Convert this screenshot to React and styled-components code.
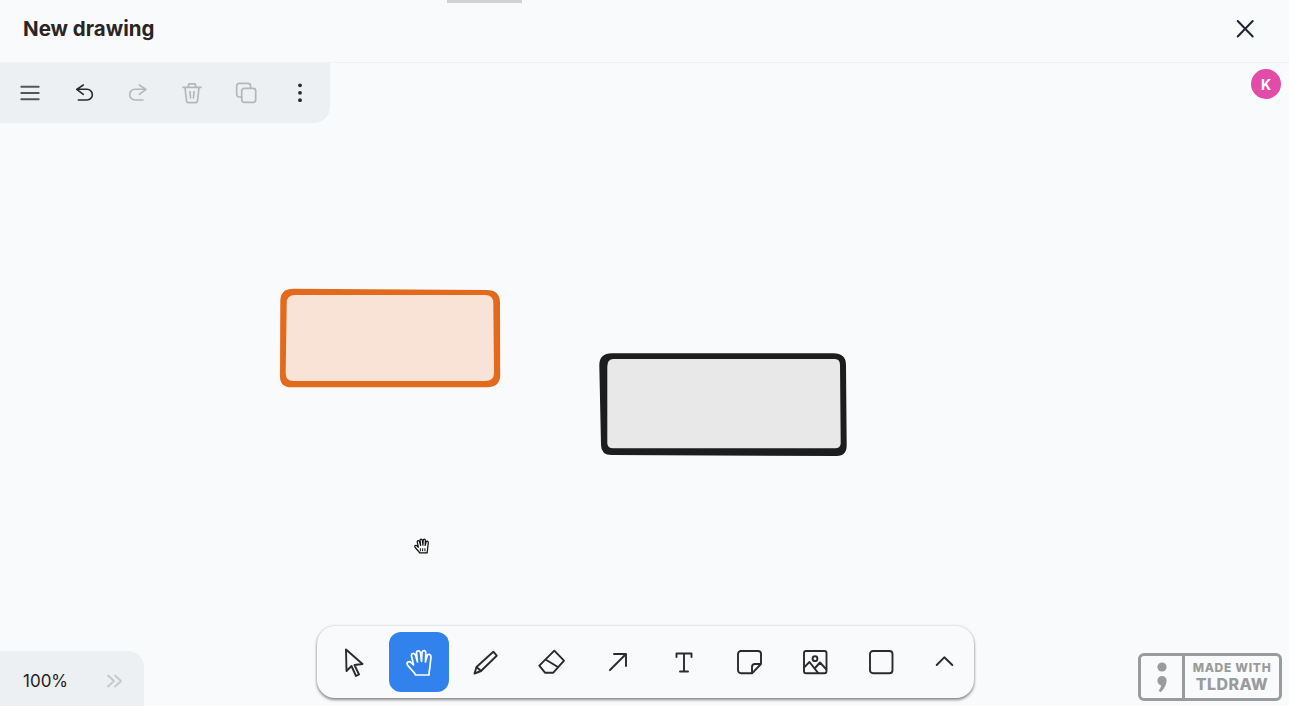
import React from "react";
import styled, { createGlobalStyle } from "styled-components";

const Global = createGlobalStyle`
  html, body { margin: 0; padding: 0; height: 100%; overflow: hidden; }
  body { background: #f9fafc; font-family: Inter, "Liberation Sans", sans-serif; color: #1d1d1d; }
`;

const Page = styled.div`
  position: relative;
  width: 100%;
  height: 100vh;
  display: flex;
  flex-direction: column;
  background: #f9fafc;
  overflow: hidden;
`;

const DragHandle = styled.div`
  position: absolute;
  left: 447px;
  top: 0;
  width: 75px;
  height: 3px;
  background: #d0d1d3;
`;

const Header = styled.header`
  box-sizing: border-box;
  height: 63px;
  flex: none;
  display: flex;
  align-items: center;
  justify-content: space-between;
  padding: 0 32px 4px 23px;
  border-bottom: 1px solid #f0f2f4;
`;

const Title = styled.h1`
  margin: 0;
  font-size: 20.5px;
  line-height: 24px;
  font-weight: 700;
  color: #292524;
`;

const CloseButton = styled.button`
  display: flex;
  width: 24px;
  height: 24px;
  padding: 0;
  border: 0;
  background: none;
  color: #1d2530;
`;

const Main = styled.main`
  position: relative;
  flex: 1;
  min-height: 0;
  display: flex;
  flex-direction: column;
  justify-content: space-between;
`;

const Canvas = styled.div`
  position: absolute;
  inset: 0;
`;

const CanvasItem = styled.svg`
  position: absolute;
  left: ${(p) => p.$x}px;
  top: ${(p) => p.$y}px;
  display: block;
  overflow: visible;
`;

const TopRow = styled.div`
  position: relative;
  display: flex;
  justify-content: space-between;
  align-items: flex-start;
`;

const MenuPanel = styled.nav`
  display: flex;
  height: 60px;
  padding: 0 3px;
  background: #edf0f2;
  border-bottom-right-radius: 16px;
`;

const MenuButton = styled.button`
  width: 54px;
  height: 60px;
  padding: 0;
  border: 0;
  background: none;
  display: flex;
  align-items: center;
  justify-content: center;
  color: ${(p) => (p.$disabled ? "#b4b7ba" : p.$muted ? "#555" : "#2a2a2a")};
`;

const Avatar = styled.div`
  width: 30px;
  height: 30px;
  margin: 6px 8px 0 0;
  border-radius: 50%;
  background: #e34ba9;
  color: #fff;
  font-size: 14px;
  font-weight: 700;
  display: flex;
  align-items: center;
  justify-content: center;
`;

const BottomRow = styled.div`
  position: relative;
  display: grid;
  grid-template-columns: 317px auto 1fr;
  align-items: end;
`;

const ZoomPanel = styled.div`
  box-sizing: border-box;
  width: 144px;
  height: 55px;
  padding: 5px 0 0 23px;
  background: #edf0f2;
  border-top-right-radius: 16px;
  display: flex;
  align-items: center;
  gap: 38px;
  font-size: 17px;
  color: #1d1d1d;
`;

const Toolbar = styled.div`
  box-sizing: border-box;
  height: 72px;
  margin-bottom: 8px;
  padding: 6px 3px 6px 6px;
  display: flex;
  gap: 6px;
  background: #f9fafc;
  border-radius: 18px;
  box-shadow: 0 2px 3px rgba(0, 0, 0, 0.42), 0 0 3px rgba(0, 0, 0, 0.18);
`;

const ToolButton = styled.button`
  width: ${(p) => (p.$narrow ? 54 : 60)}px;
  height: 60px;
  padding: 0;
  border: 0;
  border-radius: 12px;
  display: flex;
  align-items: center;
  justify-content: center;
  background: ${(p) => (p.$active ? "#3182ed" : "transparent")};
  color: ${(p) => (p.$active ? "#fff" : "#2b2b2b")};
`;

const Watermark = styled.div`
  box-sizing: border-box;
  justify-self: end;
  width: 144px;
  height: 48px;
  margin: 0 7px 5px 0;
  display: flex;
  border: 3px solid #9b9b9b;
  border-radius: 6px;
  color: #9b9b9b;
`;

const WatermarkMark = styled.div`
  width: 41px;
  flex: none;
  display: flex;
  align-items: center;
  justify-content: center;
  border-right: 3px solid #9b9b9b;
`;

const WatermarkText = styled.div`
  flex: 1;
  display: flex;
  flex-direction: column;
  align-items: center;
  justify-content: center;
  font-family: Inter, "Liberation Sans", sans-serif;
  font-weight: 800;
`;

const MadeWith = styled.span`
  font-size: 12px;
  line-height: 15px;
  letter-spacing: 0.7px;
`;

const Brand = styled.span`
  font-size: 16px;
  line-height: 19px;
  letter-spacing: 0.4px;
`;

const Icon = ({ size = 30, sw = 1.9, children }) => (
  <svg width={size} height={size} viewBox={`0 0 ${size} ${size}`} fill="none" stroke="currentColor"
    strokeWidth={sw} strokeLinecap="round" strokeLinejoin="round">
    {children}
  </svg>
);

const HAND = "M11.5 28C11 25.5 8 24 3.5 18C2 15.5 5 13.5 7 15.5L9.5 18L7.5 9C7 6 10.5 5.5 11.5 8.5L13.5 15L12.5 6C12.5 3 16 3 16.5 6L17.5 14.5L18 5.5C18.5 3 21.8 3 21.8 6L21.5 15L23.2 8.5C24 6.5 27 7 27 10L26 19C26 22 25 23 25 28Z";

const tools = [
  { key: "select", shift: 1, el: <path d="M7 2.5L7.5 24L12.5 19L17 29L20 27.5L15.5 18L23.5 17Z" /> },
  { key: "hand", active: true, sw: 1.7, el: <path d={HAND} /> },
  { key: "draw", el: <path d="M23.3 4.7L6.5 20L4.5 26.5L11 24L26.7 8.7ZM6.5 20L11 24" /> },
  { key: "eraser", el: <path d="M18.3 3.7L28 13.7L17.3 25.7H9L3.3 18.7ZM9.5 12.5L22.3 20.3" /> },
  { key: "arrow", shift: 1, el: <path d="M7 23L23 7M11 7H23V19" /> },
  { key: "text", shift: 1, el: <path d="M7.5 10V6.5H22.5V10M15 6.5V24.5M11 24.5H19" /> },
  { key: "note", shift: 1, el: <path d="M6 4H23A3 3 0 0 1 26 7V17L17 26.3H6A3 3 0 0 1 3 23.3V7A3 3 0 0 1 6 4ZM26 17H20A3 3 0 0 0 17 20V26.3" /> },
  { key: "image", shift: 1, el: <><rect x="3" y="4" width="22.5" height="22.3" rx="2" /><circle cx="14" cy="11.7" r="2.4" /><path d="M3.5 20L8.5 15L17 25.8M14.5 20.5L19 15.5L25 22" /></> },
  { key: "rect", shift: 1, el: <rect x="3" y="4" width="22.5" height="22.3" rx="3" /> },
];

export default function App() {
  return (
    <Page>
      <Global />
      <DragHandle />
      <Header>
        <Title>New drawing</Title>
        <CloseButton aria-label="Close">
          <Icon size={24} sw={2}><path d="M4.7 4L19.7 19.5M19.7 4L4.7 19.5" /></Icon>
        </CloseButton>
      </Header>
      <Main>
        <Canvas>
          <CanvasItem $x={279} $y={225} width="223" height="101" viewBox="279 288 223 101">
            <path fill="#f8e3d6" d="M286 294H495V382H286Z" />
            <path fill="#e36a1c" fillRule="evenodd" d="M280.3 300Q281 288.7 293.3 288.7L486.7 290Q500 290 500 303L500.2 375Q500.2 387.3 486.7 387.3L291.7 387.3Q280 387.3 280 376.7ZM286.7 303Q286.7 295 295 295L485 295Q493.3 295 493.3 303L494 373Q494 381 485 381L293.3 381Q285.7 381 285.7 373Z" />
          </CanvasItem>
          <CanvasItem $x={598} $y={289} width="250" height="105" viewBox="598 352 250 105">
            <path fill="#e8e8e8" d="M606 358H842V450H606Z" />
            <path fill="#1d1d1d" fillRule="evenodd" d="M599.3 365Q599.5 353.3 611.7 353.3L833.3 353.3Q846 353.3 846 365L846.7 445Q846.7 456 836.7 456L611.7 455Q601 455 601 445ZM607.3 366.7Q607.3 359 613.3 359L835 359Q840 359 840 365L840.7 443.3Q840.7 448.3 835 448.3L613.3 448.3Q607.3 448.3 607.3 443.3Z" />
          </CanvasItem>
          <CanvasItem $x={413} $y={474} width="17" height="17" viewBox="0 0 30 30">
            <path d={HAND} fill="#fff" stroke="#111" strokeWidth="2.2" strokeLinejoin="round" />
            <path d="M13 20V25M17 20V25M21 20V25" stroke="#111" strokeWidth="1.8" />
          </CanvasItem>
        </Canvas>

        <TopRow>
          <MenuPanel>
            <MenuButton $muted aria-label="Menu">
              <Icon size={24} sw={2}><path d="M3.3 5.7H20.7M3.3 12H20.7M3.3 18.3H20.7" /></Icon>
            </MenuButton>
            <MenuButton aria-label="Undo">
              <Icon size={24} sw={1.6}><path d="M11.3 4L4.7 8.3L11.3 13.3M4.7 8.3H15A5.35 5.35 0 0 1 15 19H6.3" /></Icon>
            </MenuButton>
            <MenuButton $disabled aria-label="Redo">
              <Icon size={24} sw={1.6}><path d="M13.3 4L20 8.3L13.3 13.3M20 8.3H9A5.35 5.35 0 0 0 9 19H17" /></Icon>
            </MenuButton>
            <MenuButton $disabled aria-label="Delete">
              <Icon size={24} sw={1.7}><path d="M3 6.3H21M8 6.3L9 2.8H15L16 6.3M5 6.3L6.5 20A1.6 1.6 0 0 0 8 21.6H16A1.6 1.6 0 0 0 17.5 20L19 6.3M10 10.5L10.5 17M14 10.5L13.5 17" /></Icon>
            </MenuButton>
            <MenuButton $disabled aria-label="Duplicate">
              <Icon size={24} sw={1.7}><rect x="7.7" y="7.3" width="14" height="14" rx="2.5" /><path d="M16.5 7.3V4.8A2.5 2.5 0 0 0 14 2.3H5.2A2.5 2.5 0 0 0 2.7 4.8V13.5A2.5 2.5 0 0 0 5.2 16H7.7" /></Icon>
            </MenuButton>
            <MenuButton aria-label="More">
              <Icon size={24} sw={0}><g fill="currentColor"><circle cx="12" cy="4.3" r="1.9" /><circle cx="12" cy="11.8" r="1.9" /><circle cx="12" cy="19.2" r="1.9" /></g></Icon>
            </MenuButton>
          </MenuPanel>
          <Avatar>K</Avatar>
        </TopRow>

        <BottomRow>
          <ZoomPanel>
            <span>100%</span>
            <svg width="17" height="14" viewBox="0 0 17 14" fill="none" stroke="#c5c8cb" strokeWidth="1.8" strokeLinecap="round" strokeLinejoin="round">
              <path d="M2 1.5L8 7L2 12.5M9 1.5L15 7L9 12.5" />
            </svg>
          </ZoomPanel>
          <Toolbar>
            {tools.map((t) => (
              <ToolButton key={t.key} $active={t.active} aria-label={t.key}>
                <Icon sw={t.sw}><g transform={`translate(${t.shift || 0} 0)`}>{t.el}</g></Icon>
              </ToolButton>
            ))}
            <ToolButton $narrow aria-label="More tools">
              <Icon><path d="M7.7 18L15.3 10.3L23.3 18" /></Icon>
            </ToolButton>
          </Toolbar>
          <Watermark>
            <WatermarkMark>
              <svg width="12" height="32" viewBox="0 0 12 32" fill="#9b9b9b">
                <circle cx="6" cy="6" r="4.6" />
                <path d="M1.4 19.5A4.6 4.6 0 1 1 10.6 19.5C10.6 24 8 28 4.6 31.2L2.6 29.8C4 28 4.8 26.4 5 24.2C3 24 1.4 22 1.4 19.5Z" />
              </svg>
            </WatermarkMark>
            <WatermarkText>
              <MadeWith>MADE WITH</MadeWith>
              <Brand>TLDRAW</Brand>
            </WatermarkText>
          </Watermark>
        </BottomRow>
      </Main>
    </Page>
  );
}
